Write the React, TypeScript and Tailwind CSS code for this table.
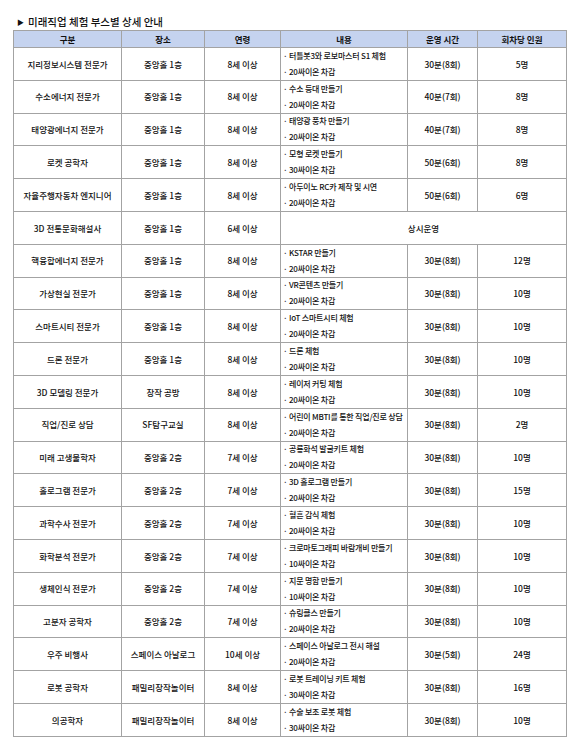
import React from 'react';

interface Booth {
  name: string;
  place: string;
  age: string;
  content?: [string, string];
  time?: string;
  people?: string;
}

const booths: Booth[] = [
  { name: '지리정보시스템 전문가', place: '중앙홀 1층', age: '8세 이상', content: ['터틀봇3와 로보마스터 S1 체험', '20싸이온 차감'], time: '30분(8회)', people: '5명' },
  { name: '수소에너지 전문가', place: '중앙홀 1층', age: '8세 이상', content: ['수소 등대 만들기', '20싸이온 차감'], time: '40분(7회)', people: '8명' },
  { name: '태양광에너지 전문가', place: '중앙홀 1층', age: '8세 이상', content: ['태양광 풍차 만들기', '20싸이온 차감'], time: '40분(7회)', people: '8명' },
  { name: '로켓 공학자', place: '중앙홀 1층', age: '8세 이상', content: ['모형 로켓 만들기', '30싸이온 차감'], time: '50분(6회)', people: '8명' },
  { name: '자율주행자동차 엔지니어', place: '중앙홀 1층', age: '8세 이상', content: ['아두이노 RC카 제작 및 시연', '20싸이온 차감'], time: '50분(6회)', people: '6명' },
  { name: '3D 전통문화해설사', place: '중앙홀 1층', age: '6세 이상' },
  { name: '핵융합에너지 전문가', place: '중앙홀 1층', age: '8세 이상', content: ['KSTAR 만들기', '20싸이온 차감'], time: '30분(8회)', people: '12명' },
  { name: '가상현실 전문가', place: '중앙홀 1층', age: '8세 이상', content: ['VR콘텐츠 만들기', '20싸이온 차감'], time: '30분(8회)', people: '10명' },
  { name: '스마트시티 전문가', place: '중앙홀 1층', age: '8세 이상', content: ['IoT 스마트시티 체험', '20싸이온 차감'], time: '30분(8회)', people: '10명' },
  { name: '드론 전문가', place: '중앙홀 1층', age: '8세 이상', content: ['드론 체험', '20싸이온 차감'], time: '30분(8회)', people: '10명' },
  { name: '3D 모델링 전문가', place: '창작 공방', age: '8세 이상', content: ['레이저 커팅 체험', '20싸이온 차감'], time: '30분(8회)', people: '10명' },
  { name: '직업/진로 상담', place: 'SF탐구교실', age: '8세 이상', content: ['어린이 MBTI를 통한 직업/진로 상담', '20싸이온 차감'], time: '30분(8회)', people: '2명' },
  { name: '미래 고생물학자', place: '중앙홀 2층', age: '7세 이상', content: ['공룡화석 발굴키트 체험', '20싸이온 차감'], time: '30분(8회)', people: '10명' },
  { name: '홀로그램 전문가', place: '중앙홀 2층', age: '7세 이상', content: ['3D 홀로그램 만들기', '20싸이온 차감'], time: '30분(8회)', people: '15명' },
  { name: '과학수사 전문가', place: '중앙홀 2층', age: '7세 이상', content: ['혈흔 감식 체험', '20싸이온 차감'], time: '30분(8회)', people: '10명' },
  { name: '화학분석 전문가', place: '중앙홀 2층', age: '7세 이상', content: ['크로마토그래피 바람개비 만들기', '10싸이온 차감'], time: '30분(8회)', people: '10명' },
  { name: '생체인식 전문가', place: '중앙홀 2층', age: '7세 이상', content: ['지문 명함 만들기', '10싸이온 차감'], time: '30분(8회)', people: '10명' },
  { name: '고분자 공학자', place: '중앙홀 2층', age: '7세 이상', content: ['슈링클스 만들기', '20싸이온 차감'], time: '30분(8회)', people: '10명' },
  { name: '우주 비행사', place: '스페이스 아날로그', age: '10세 이상', content: ['스페이스 아날로그 전시 해설', '20싸이온 차감'], time: '30분(5회)', people: '24명' },
  { name: '로봇 공학자', place: '패밀리창작놀이터', age: '8세 이상', content: ['로봇 트레이닝 키트 체험', '30싸이온 차감'], time: '30분(8회)', people: '16명' },
  { name: '의공학자', place: '패밀리창작놀이터', age: '8세 이상', content: ['수술 보조 로봇 체험', '30싸이온 차감'], time: '30분(8회)', people: '10명' },
];

const headers = ['구분', '장소', '연령', '내용', '운영 시간', '회차당 인원'];

const cell = 'border border-[#a3a3a3] text-center align-middle p-0 whitespace-nowrap';

export default function App() {
  return (
    <div
      className="bg-white w-[580px] h-[751px] pt-[15px] pl-[13px] text-[#111]"
      style={{ fontFamily: '"Noto Sans CJK KR", "Noto Sans", sans-serif' }}
    >
      <div className="flex items-center h-[15px] pl-[4px] text-[10.5px] font-medium leading-none">
        <span className="text-[7px] mr-[4px]">▶</span>
        <span>미래직업 체험 부스별 상세 안내</span>
      </div>
      <table className="table-fixed border-collapse w-[553px] text-[8.5px] leading-none font-medium">
        <colgroup>
          <col className="w-[108px]" />
          <col className="w-[83px]" />
          <col className="w-[76px]" />
          <col className="w-[127px]" />
          <col className="w-[70px]" />
          <col className="w-[89px]" />
        </colgroup>
        <thead>
          <tr className="h-[17px] bg-[#c5d3ef]">
            {headers.map((h) => (
              <th key={h} className={`${cell} font-bold`}>{h}</th>
            ))}
          </tr>
        </thead>
        <tbody>
          {booths.map((b) => (
            <tr key={b.name} className="h-[32.8px]">
              <td className={cell}>{b.name}</td>
              <td className={cell}>{b.place}</td>
              <td className={cell}>{b.age}</td>
              {b.content ? (
                <>
                  <td className={`${cell} text-left overflow-hidden`}>
                    <div className="flex flex-col justify-between h-[30px] pl-[2px] py-[3px] text-[8px] tracking-[-0.2px]">
                      <span>· {b.content[0]}</span>
                      <span>· {b.content[1]}</span>
                    </div>
                  </td>
                  <td className={cell}>{b.time}</td>
                  <td className={cell}>{b.people}</td>
                </>
              ) : (
                <td className={cell} colSpan={3}>상시운영</td>
              )}
            </tr>
          ))}
        </tbody>
      </table>
    </div>
  );
}
